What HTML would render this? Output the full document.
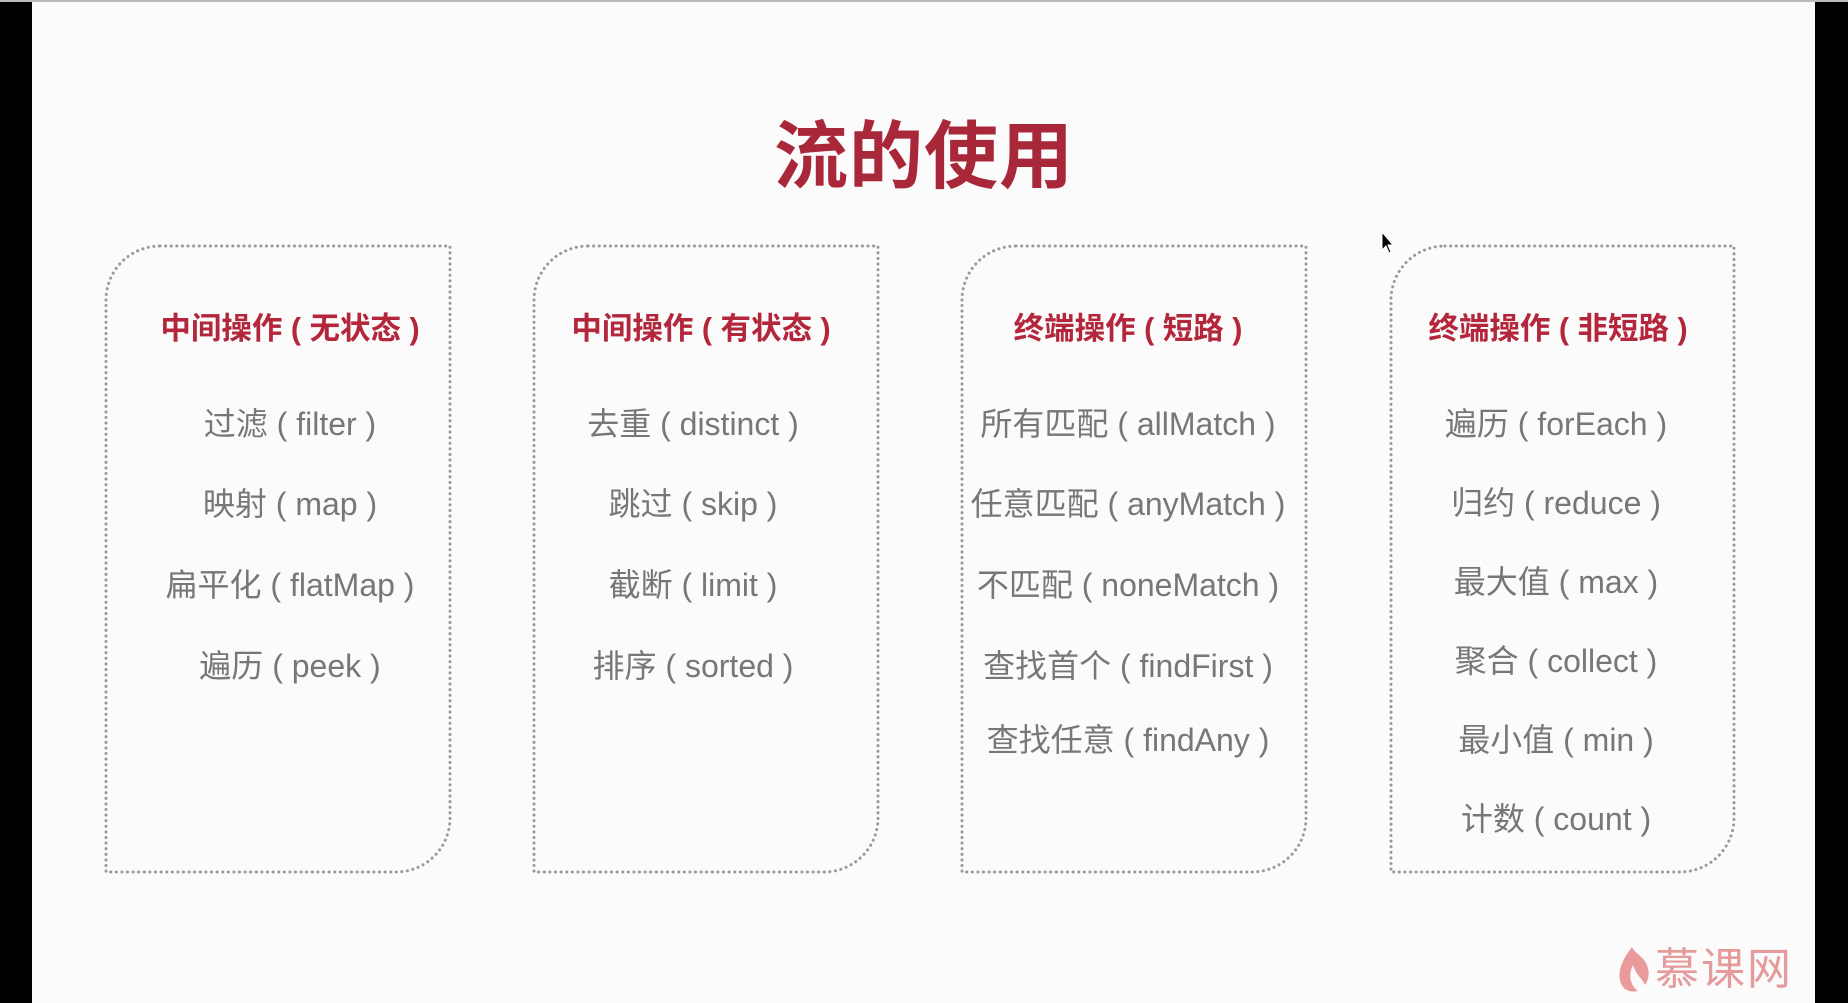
<!DOCTYPE html>
<html><head><meta charset="utf-8"><style>
html,body{margin:0;padding:0;}
body{width:1848px;height:1003px;background:#000;position:relative;overflow:hidden;font-family:"Liberation Sans","Noto Sans CJK SC",sans-serif;}
.slide{position:absolute;left:32px;top:2px;width:1783px;height:1001px;background:#fbfbfb;}
.topline{position:absolute;left:0;top:0;width:1848px;height:2px;background:#bbb;}
.title{position:absolute;left:0;width:1848px;top:101px;text-align:center;font-size:74px;color:#a8283a;font-family:"Noto Sans CJK SC",sans-serif;font-weight:bold;line-height:100px;letter-spacing:1px;}
.t{position:absolute;text-align:center;white-space:pre;line-height:40px;height:40px;font-family:"Liberation Sans","Noto Sans CJK SC",sans-serif;}
.h{font-size:30.5px;color:#b3263b;font-weight:bold;}
.i{font-size:32px;color:#777;}
</style></head><body>
<div class="slide"></div>
<div class="topline"></div>
<div class="title">流的使用</div>
<svg width="1848" height="1003" style="position:absolute;left:0;top:0">
<g fill="none" stroke="#999" stroke-width="3" stroke-dasharray="0.1 5.5" stroke-linecap="round">
<path d="M160 246 H450 V818 A54 54 0 0 1 396 872 H106 V300 A54 54 0 0 1 160 246 Z"/>
<path d="M588 246 H878 V818 A54 54 0 0 1 824 872 H534 V300 A54 54 0 0 1 588 246 Z"/>
<path d="M1016 246 H1306 V818 A54 54 0 0 1 1252 872 H962 V300 A54 54 0 0 1 1016 246 Z"/>
<path d="M1445 246 H1734 V818 A54 54 0 0 1 1680 872 H1391 V300 A54 54 0 0 1 1445 246 Z"/>
</g>
<path d="M1382 232 L1382 250 L1386 246 L1389 253 L1391 252 L1388 245 L1393 245 Z" fill="#000" stroke="#fff" stroke-width="1"/>
<path d="M1632 947 C1622 960 1618 970 1620 980 C1622 990 1630 993 1638 991 C1630 985 1628 975 1633 965 C1636 975 1642 978 1645 985 C1650 978 1650 968 1644 960 C1640 955 1634 952 1632 947 Z" fill="#e99a9a"/>
</svg>
<div class="t" style="left:1655px;top:940px;font-size:44px;color:#e59b9b;line-height:50px;font-family:'Noto Sans CJK SC',sans-serif;letter-spacing:2px">慕课网</div>

<div class="t h" style="left:110px;width:360px;top:309px">中间操作 ( 无状态 )</div>
<div class="t i" style="left:110px;width:360px;top:404px">过滤 ( filter )</div>
<div class="t i" style="left:110px;width:360px;top:484px">映射 ( map )</div>
<div class="t i" style="left:110px;width:360px;top:565px">扁平化 ( flatMap )</div>
<div class="t i" style="left:110px;width:360px;top:646px">遍历 ( peek )</div>

<div class="t h" style="left:521px;width:360px;top:309px">中间操作 ( 有状态 )</div>
<div class="t i" style="left:513px;width:360px;top:404px">去重 ( distinct )</div>
<div class="t i" style="left:513px;width:360px;top:484px">跳过 ( skip )</div>
<div class="t i" style="left:513px;width:360px;top:565px">截断 ( limit )</div>
<div class="t i" style="left:513px;width:360px;top:646px">排序 ( sorted )</div>

<div class="t h" style="left:948px;width:360px;top:309px">终端操作 ( 短路 )</div>
<div class="t i" style="left:948px;width:360px;top:404px">所有匹配 ( allMatch )</div>
<div class="t i" style="left:948px;width:360px;top:484px">任意匹配 ( anyMatch )</div>
<div class="t i" style="left:948px;width:360px;top:565px">不匹配 ( noneMatch )</div>
<div class="t i" style="left:948px;width:360px;top:646px">查找首个 ( findFirst )</div>
<div class="t i" style="left:948px;width:360px;top:720px">查找任意 ( findAny )</div>

<div class="t h" style="left:1378px;width:360px;top:309px">终端操作 ( 非短路 )</div>
<div class="t i" style="left:1376px;width:360px;top:404px">遍历 ( forEach )</div>
<div class="t i" style="left:1376px;width:360px;top:483px">归约 ( reduce )</div>
<div class="t i" style="left:1376px;width:360px;top:562px">最大值 ( max )</div>
<div class="t i" style="left:1376px;width:360px;top:641px">聚合 ( collect )</div>
<div class="t i" style="left:1376px;width:360px;top:720px">最小值 ( min )</div>
<div class="t i" style="left:1376px;width:360px;top:799px">计数 ( count )</div>
</body></html>
